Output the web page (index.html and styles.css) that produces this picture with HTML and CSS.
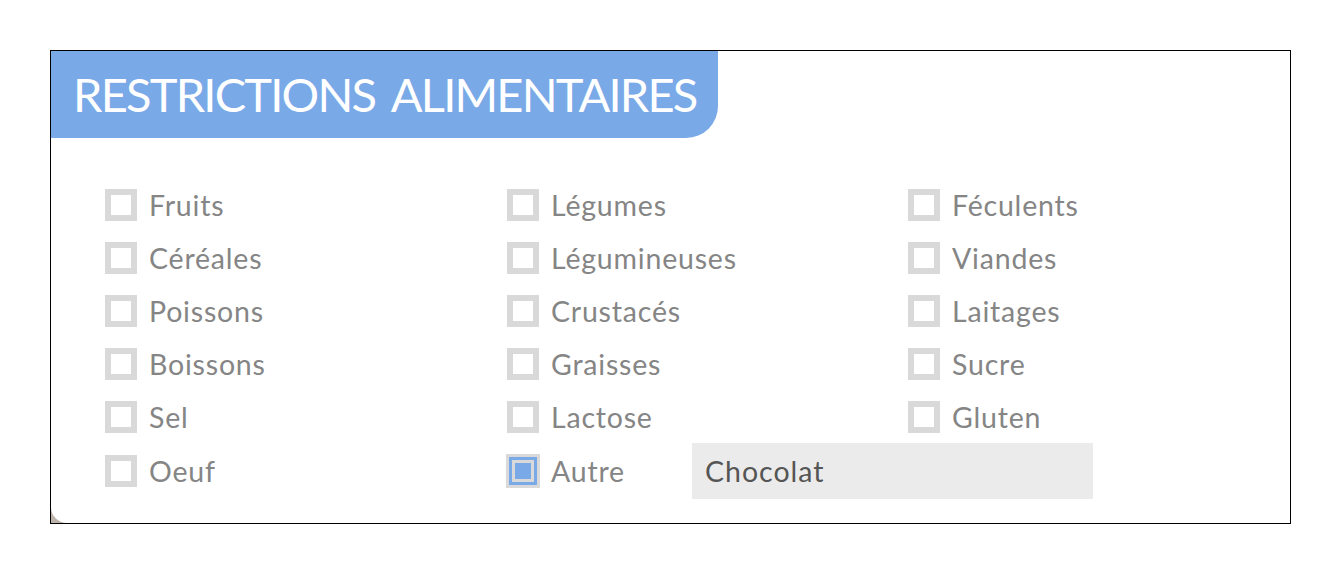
FILE: index.html
```html
<!DOCTYPE html>
<html lang="fr">
<head>
    <meta charset="UTF-8">
    <meta name="viewport" content="width=device-width, initial-scale=1.0">
    <title>Restrictions alimentaires</title>
    <link rel="stylesheet" href="styles.css">
</head>
<body>
    <div class="frame">
        <div class="panel">
            <div class="panel-header">
                <h1>RESTRICTIONS ALIMENTAIRES</h1>
            </div>

            <div class="options">
                <label class="option"><span class="box"></span><span class="label">Fruits</span></label>
                <label class="option"><span class="box"></span><span class="label">Légumes</span></label>
                <label class="option"><span class="box"></span><span class="label">Féculents</span></label>

                <label class="option"><span class="box"></span><span class="label">Céréales</span></label>
                <label class="option"><span class="box"></span><span class="label">Légumineuses</span></label>
                <label class="option"><span class="box"></span><span class="label">Viandes</span></label>

                <label class="option"><span class="box"></span><span class="label">Poissons</span></label>
                <label class="option"><span class="box"></span><span class="label">Crustacés</span></label>
                <label class="option"><span class="box"></span><span class="label">Laitages</span></label>

                <label class="option"><span class="box"></span><span class="label">Boissons</span></label>
                <label class="option"><span class="box"></span><span class="label">Graisses</span></label>
                <label class="option"><span class="box"></span><span class="label">Sucre</span></label>

                <label class="option"><span class="box"></span><span class="label">Sel</span></label>
                <label class="option"><span class="box"></span><span class="label">Lactose</span></label>
                <label class="option"><span class="box"></span><span class="label">Gluten</span></label>

                <label class="option"><span class="box"></span><span class="label">Oeuf</span></label>
                <div class="option other">
                    <label class="option other-check"><span class="box checked"></span><span class="label">Autre</span></label>
                    <div class="other-input">Chocolat</div>
                </div>
            </div>
        </div>
    </div>
</body>
</html>
```

FILE: styles.css
```css
body {
    margin: 0;
    padding: 50px;
    background-color: #fff;
    font-family: Lato, 'Open Sans', sans-serif;
}
.frame {
    width: 1239px;
    height: 472px;
    border: 1px solid #000;
    background-color: #bdb3ab;
}
.panel {
    height: 100%;
    background-color: #fff;
    border-radius: 0 0 0 16px;
    display: flex;
    flex-direction: column;
}
.panel-header {
    width: 667px;
    height: 87px;
    box-sizing: border-box;
    padding-left: 22px;
    background-color: #7aa9e8;
    border-bottom-right-radius: 32px;
    display: flex;
    align-items: center;
}
.panel-header h1 {
    margin: 0;
    color: #fff;
    font-size: 47px;
    font-weight: 400;
    letter-spacing: -1.8px;
    word-spacing: 7px;
    line-height: 1;
    white-space: nowrap;
}
.options {
    display: grid;
    grid-template-columns: 402px 401px 1fr;
    grid-template-rows: repeat(5, 53px) 56px;
    padding: 40px 0 0 54px;
}
.option {
    display: flex;
    align-items: center;
    gap: 12px;
}
.box {
    width: 32px;
    height: 32px;
    box-sizing: border-box;
    border: 6px solid #d9d9d9;
    background-color: #fff;
    flex-shrink: 0;
}
.box.checked {
    width: 34px;
    height: 34px;
    margin: 0 -1px 0 -1px;
    border-width: 3px;
    background-color: #7aa9e8;
    box-shadow: inset 0 0 0 3px #7aa9e8, inset 0 0 0 6px #d9d9d9;
}
.label {
    color: #858585;
    font-size: 28.5px;
    letter-spacing: 0.8px;
}
.other {
    grid-column: span 2;
    gap: 0;
}
.other-check {
    width: 185px;
}
.other-input {
    width: 401px;
    height: 56px;
    box-sizing: border-box;
    padding-left: 13px;
    background-color: #ebebeb;
    color: #555;
    font-size: 28.5px;
    letter-spacing: 1px;
    display: flex;
    align-items: center;
}
```
